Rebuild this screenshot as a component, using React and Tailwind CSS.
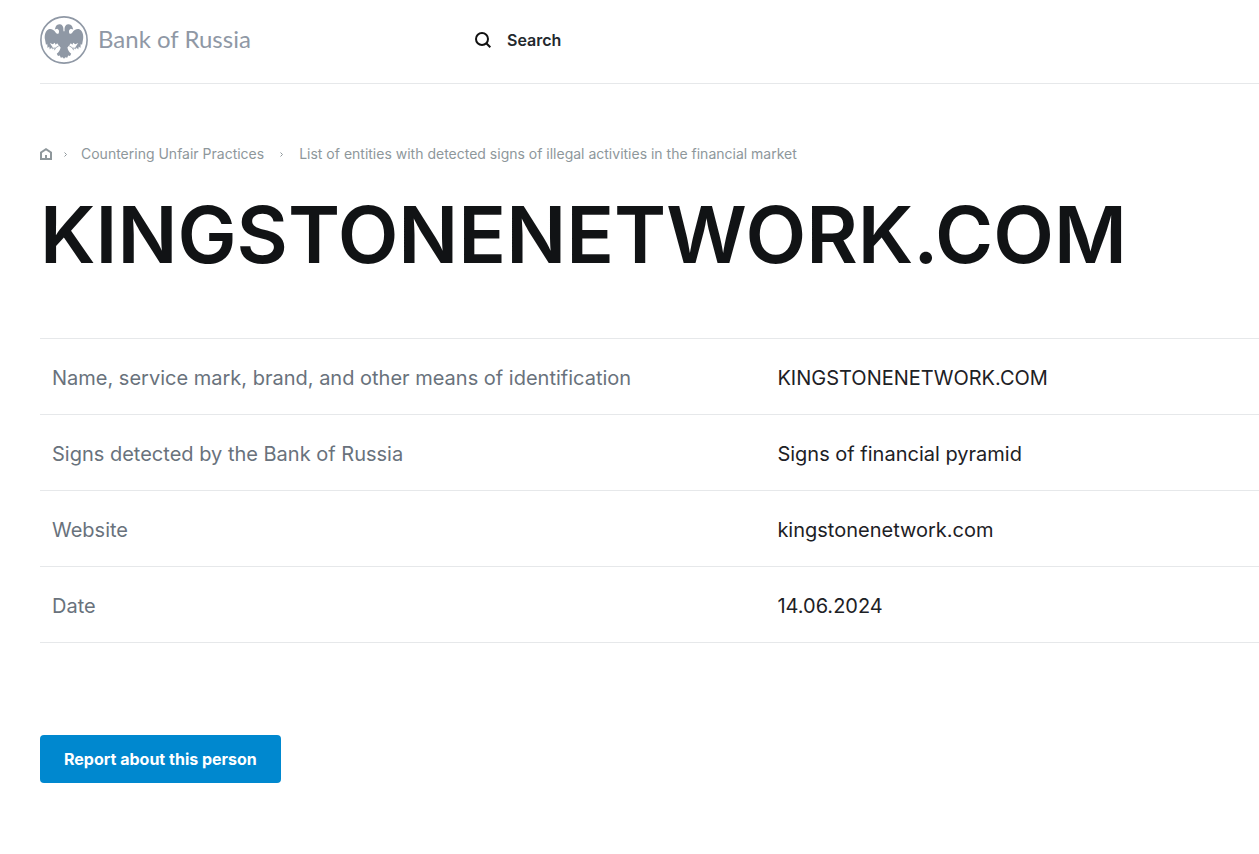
import React from "react";

const rows = [
  { label: "Name, service mark, brand, and other means of identification", value: "KINGSTONENETWORK.COM" },
  { label: "Signs detected by the Bank of Russia", value: "Signs of financial pyramid" },
  { label: "Website", value: "kingstonenetwork.com" },
  { label: "Date", value: "14.06.2024" },
];

// One half of the eagle, mirrored to make the other
const EagleHalf = () => (
  <>
    <path d="M24.1 16 L23.4 14.6 C23.8 11 22.4 8.4 20 8.2 C17.8 8 16 9.4 15.6 11 L14.8 13.6 L17.2 12.8 C18.8 13.4 19.4 15 18.8 17 C18.2 18.4 16.6 18 15.6 16.4 C14 13.4 10.6 12.2 8.2 13.4 C5.2 15.2 4.2 19.6 5 23.6 L6 29 L7.2 27.8 L7.6 32 L9.2 30.4 L9.8 33.4 L11.4 31.4 L12.2 33.6 L15.4 31.4 L19 29.8 L20.6 31.4 C20.2 34 18.8 36 16.8 37.8 L18 40 L19.8 39.4 L20.8 41.8 L22.6 41.2 L24.1 42.8 Z" />
    <path d="M9.8 27 L12.8 28.2 L14.8 26.8 L15.6 28.8 L17.2 27.2 L19.4 30.2 L16.6 31.8 L18 34.6 L15.6 33.6 L14.4 35.6 L13.4 33.2 L11 34 L12.8 31.4 Z" fill="white" />
    <path d="M18.8 29.8 L15.4 32 L12 32.4 M15.4 32 L14.4 34.2" fill="none" stroke="currentColor" strokeWidth="0.8" />
  </>
);

const Emblem = () => (
  <svg viewBox="0 0 48 48" className="w-12 h-12 shrink-0" fill="currentColor" aria-hidden="true">
    <circle cx="24" cy="24" r="23.1" fill="none" stroke="currentColor" strokeWidth="1.6" />
    <EagleHalf />
    <g transform="matrix(-1 0 0 1 48 0)">
      <EagleHalf />
    </g>
  </svg>
);

const Separator = () => (
  <svg viewBox="0 0 3 5" className="w-[3px] h-[5px]" fill="none" stroke="currentColor" aria-hidden="true">
    <path d="M0.5 0.5 L2.5 2.5 L0.5 4.5" />
  </svg>
);

const Header = () => (
  <header className="flex items-center h-21 pb-1 border-b border-[#e6e8ea]">
    <a href="#" className="flex items-center gap-2.5 w-[435px] shrink-0 text-[#8f98a5]">
      <Emblem />
      <span className="pb-0.5 font-['Lato',sans-serif] text-2xl">Bank of Russia</span>
    </a>
    <button className="flex items-center gap-4 text-base font-semibold text-[#23282d]">
      <svg viewBox="0 0 16 16" className="w-4 h-4" fill="none" stroke="#111" strokeWidth="2" aria-hidden="true">
        <circle cx="7" cy="7" r="6" />
        <path d="M11.3 11.3 L15.3 15.3" />
      </svg>
      Search
    </button>
  </header>
);

const Breadcrumbs = () => (
  <nav aria-label="Breadcrumbs" className="flex items-center mt-15 h-5 text-sm text-[#8e979b] whitespace-nowrap">
    <a href="#" aria-label="Home" className="mr-3">
      <svg viewBox="0 0 12 12" className="w-3 h-3" fill="none" stroke="currentColor" strokeWidth="2" aria-hidden="true">
        <path d="M1 11 V4.5 L6 1.2 L11 4.5 V11 Z" />
        <path d="M6 11 V7" />
      </svg>
    </a>
    <Separator />
    <a href="#" className="ml-3.5 mr-4">Countering Unfair Practices</a>
    <Separator />
    <a href="#" className="ml-4">
      List of entities with detected signs of illegal activities in the financial market
    </a>
  </nav>
);

const DetailsTable = () => (
  <table className="w-full mt-14 text-xl border-t border-[#e6e8ea]">
    <tbody>
      {rows.map(({ label, value }) => (
        <tr key={label} className="h-19 border-b border-[#e6e8ea]">
          <th scope="row" className="w-3/5 pl-3 pt-0.5 text-left font-normal text-[#69727c]">
            {label}
          </th>
          <td className="pl-1.5 pt-0.5 text-[#1d2125]">{value}</td>
        </tr>
      ))}
    </tbody>
  </table>
);

export default function App() {
  return (
    <div className="min-h-screen pl-10 pb-16 bg-white font-['Inter',sans-serif] overflow-x-hidden">
      <Header />
      <main>
        <Breadcrumbs />
        <h1 className="mt-[23px] mb-[57px] text-[79px] leading-[94px] font-semibold text-[#111315]">
          KINGSTONENETWORK.COM
        </h1>
        <DetailsTable />
        <button className="mt-23 h-12 px-6 rounded bg-[#0088cf] text-base font-bold text-white">
          Report about this person
        </button>
      </main>
    </div>
  );
}
